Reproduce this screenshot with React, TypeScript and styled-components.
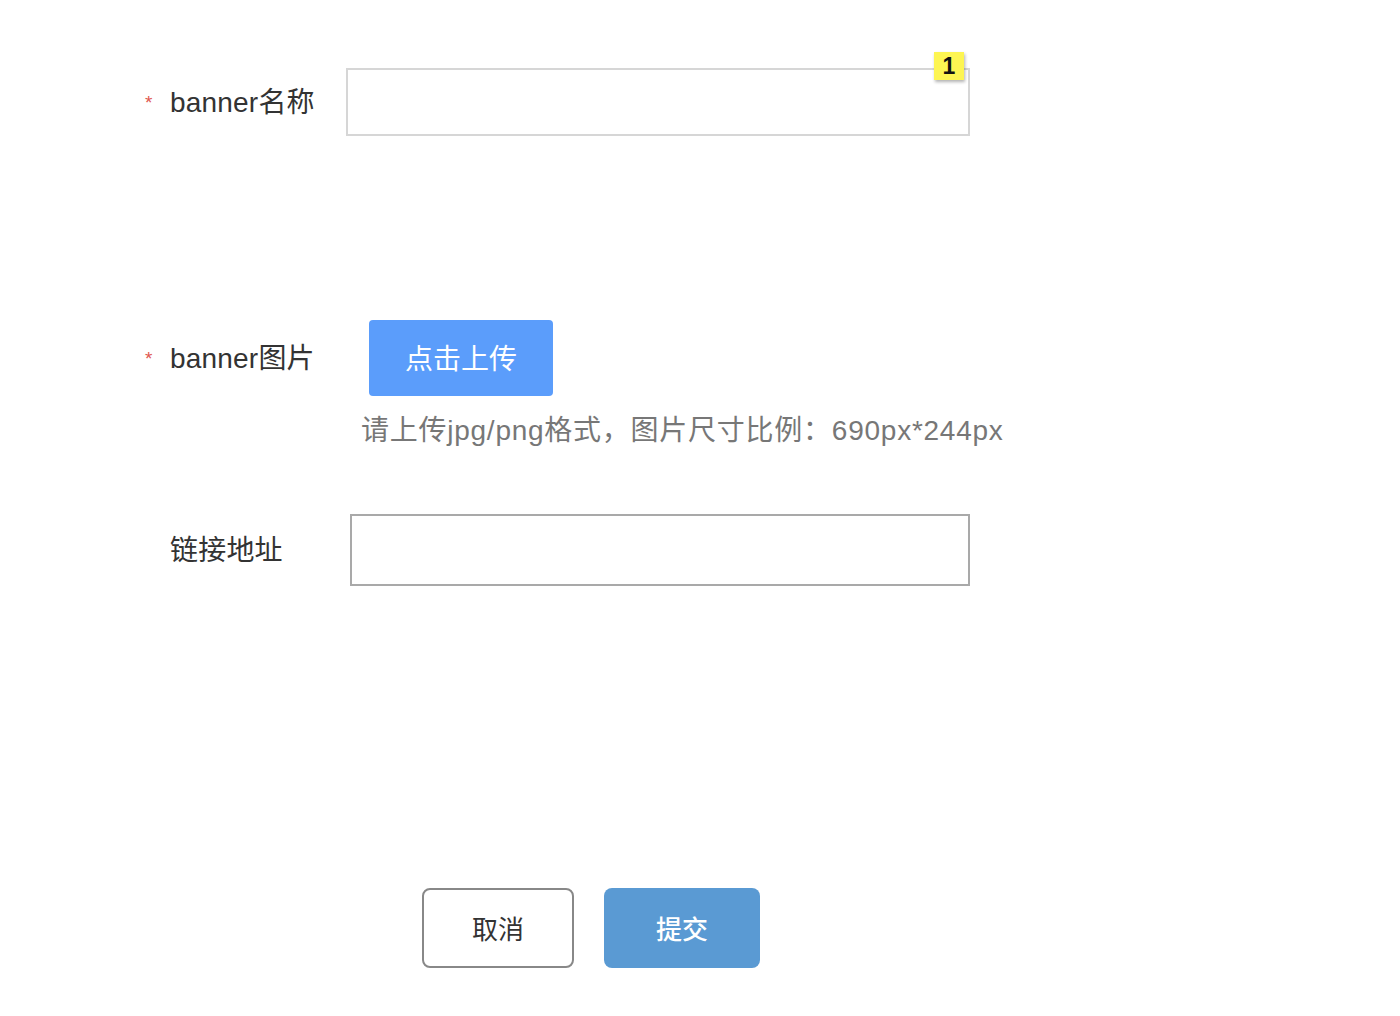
import React from "react";
import styled, { createGlobalStyle } from "styled-components";

const GlobalStyle = createGlobalStyle`
  html, body {
    margin: 0;
    padding: 0;
    background: #ffffff;
    font-family: "Liberation Sans", "Noto Sans CJK SC", sans-serif;
  }
`;

const Page = styled.form`
  display: flex;
  flex-direction: column;
  padding: 68px 0 0 140px;
  width: 1260px;
  height: 948px;
`;

const Row = styled.div<{ $top?: number }>`
  display: flex;
  align-items: center;
  margin-top: ${(p) => p.$top ?? 0}px;
`;

const Label = styled.label`
  display: flex;
  align-items: center;
  width: 206px;
  flex-shrink: 0;
  padding-bottom: 4px;
  font-size: 28px;
  letter-spacing: 0.2px;
  color: #333333;
`;

const Star = styled.span<{ $show?: boolean }>`
  display: inline-block;
  width: 30px;
  padding: 6px 0 0 5px;
  box-sizing: border-box;
  font-size: 19px;
  color: #e0564f;
  visibility: ${(p) => (p.$show ? "visible" : "hidden")};
`;

const Field = styled.div<{ $offset: number }>`
  position: relative;
  margin-left: ${(p) => p.$offset}px;
`;

const Input = styled.input<{ $w: number; $h: number; $border: string }>`
  display: block;
  width: ${(p) => p.$w}px;
  height: ${(p) => p.$h}px;
  box-sizing: border-box;
  border: 2px solid ${(p) => p.$border};
  outline: none;
  padding: 0 14px;
  font-size: 26px;
  font-family: inherit;
  background: #ffffff;
`;

const Badge = styled.span`
  position: absolute;
  top: -16px;
  right: 6px;
  width: 30px;
  height: 28px;
  display: flex;
  align-items: center;
  justify-content: center;
  background: #fdf552;
  box-shadow: 1px 2px 3px rgba(0, 0, 0, 0.3);
  font-size: 23px;
  font-weight: bold;
  color: #111111;
`;

const UploadBtn = styled.button`
  width: 184px;
  height: 76px;
  border: none;
  border-radius: 4px;
  background: #5b9dfb;
  color: #ffffff;
  font-size: 28px;
  font-family: inherit;
  padding-bottom: 4px;
  cursor: pointer;
`;

const Hint = styled.p`
  margin: 15px 0 0 221px;
  font-size: 28px;
  line-height: 39px;
  letter-spacing: 0.75px;
  color: #777777;
`;

const Footer = styled.div`
  display: flex;
  gap: 30px;
  margin: 302px 0 0 282px;
`;

const ActionBtn = styled.button<{ $primary?: boolean }>`
  height: 80px;
  width: ${(p) => (p.$primary ? 156 : 152)}px;
  box-sizing: border-box;
  border-radius: 8px;
  border: ${(p) => (p.$primary ? "none" : "2px solid #888888")};
  background: ${(p) => (p.$primary ? "#5a9ad3" : "#ffffff")};
  color: ${(p) => (p.$primary ? "#ffffff" : "#333333")};
  font-size: 26px;
  font-weight: ${(p) => (p.$primary ? 500 : "normal")};
  font-family: inherit;
  padding-bottom: 3px;
  cursor: pointer;
`;

function App() {
  return (
    <>
      <GlobalStyle />
      <Page onSubmit={(e) => e.preventDefault()}>
        <Row>
          <Label>
            <Star $show>*</Star>banner名称
          </Label>
          <Field $offset={0}>
            <Input $w={624} $h={68} $border="#d6d6d6" />
            <Badge>1</Badge>
          </Field>
        </Row>
        <Row $top={184}>
          <Label>
            <Star $show>*</Star>banner图片
          </Label>
          <Field $offset={23}>
            <UploadBtn type="button">点击上传</UploadBtn>
          </Field>
        </Row>
        <Hint>请上传jpg/png格式，图片尺寸比例：690px*244px</Hint>
        <Row $top={64}>
          <Label>
            <Star>*</Star>链接地址
          </Label>
          <Field $offset={4}>
            <Input $w={620} $h={72} $border="#a9a9a9" />
          </Field>
        </Row>
        <Footer>
          <ActionBtn type="button">取消</ActionBtn>
          <ActionBtn type="submit" $primary>
            提交
          </ActionBtn>
        </Footer>
      </Page>
    </>
  );
}

export default App;
